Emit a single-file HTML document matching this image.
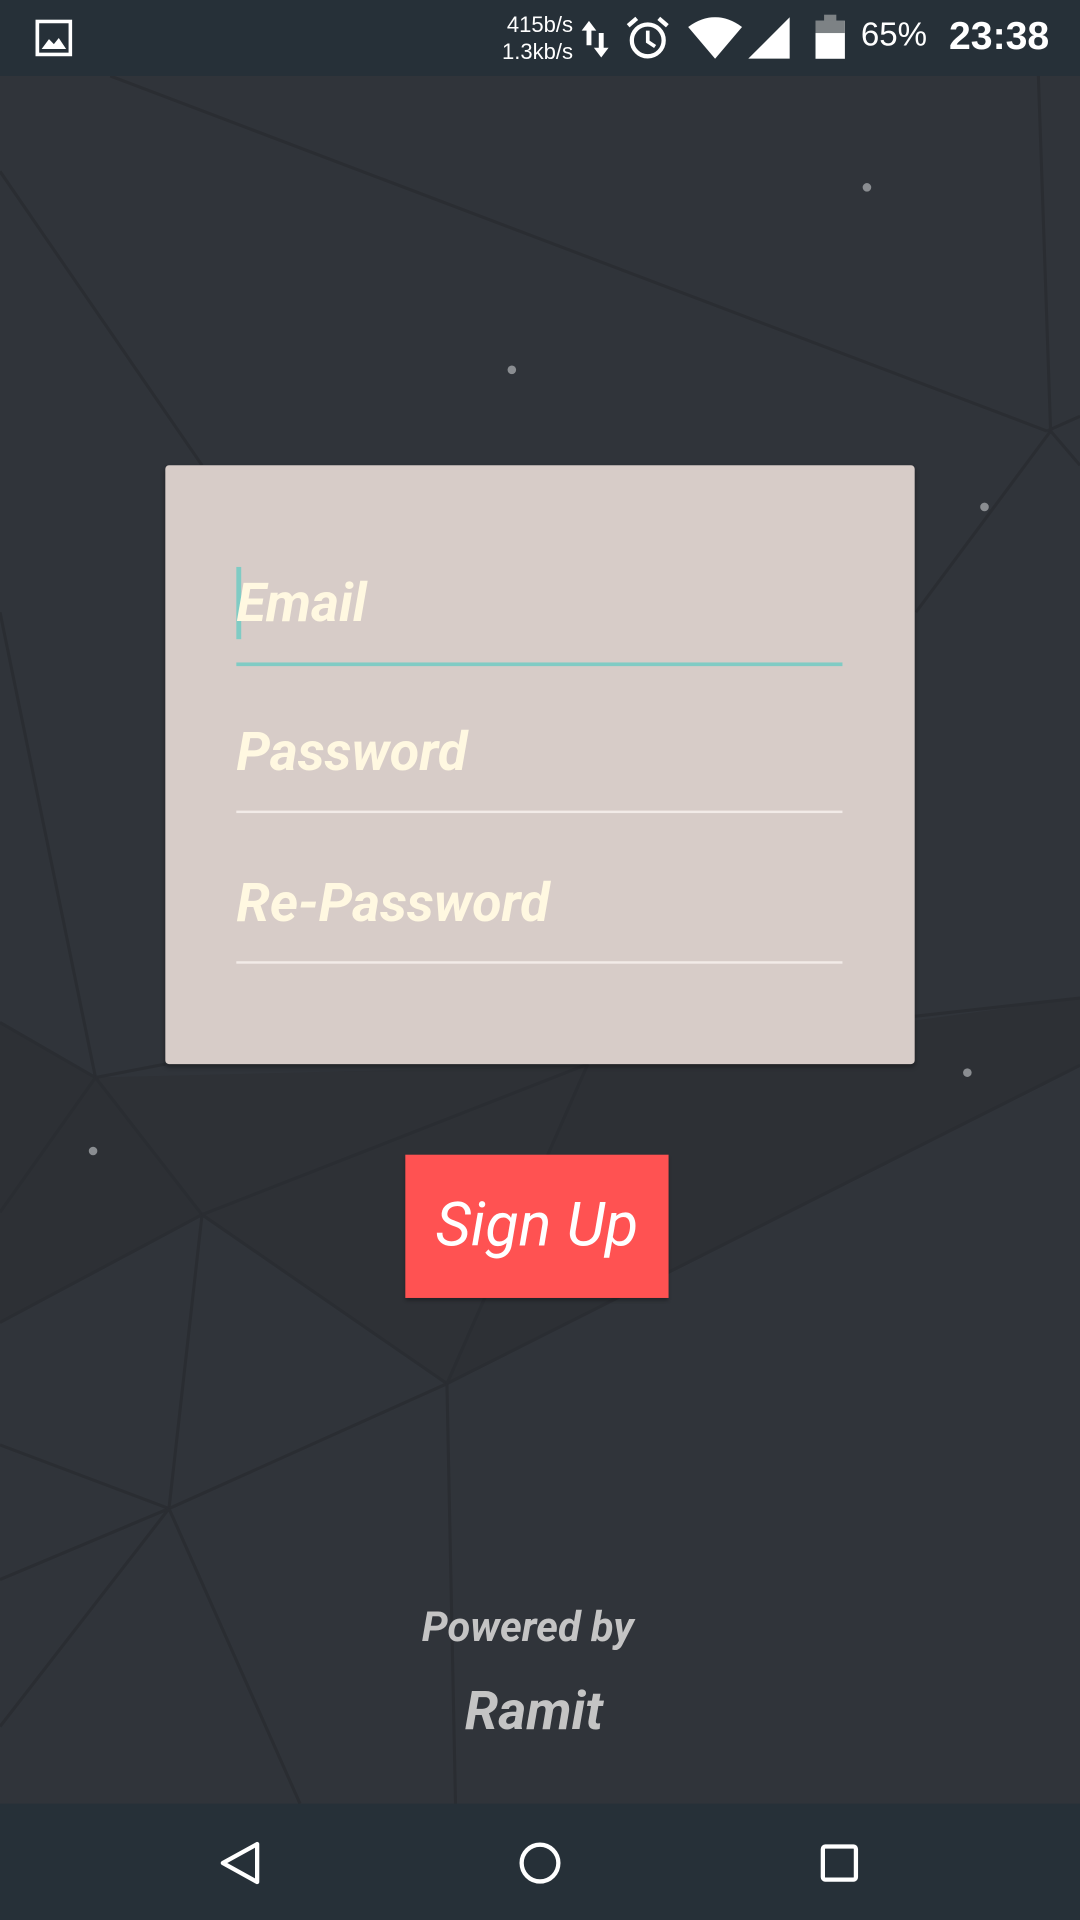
<!DOCTYPE html>
<html><head><meta charset="utf-8">
<style>
html,body{margin:0;padding:0;width:1080px;height:1920px;overflow:hidden;background:#30343a;}
#w{position:absolute;left:0;top:0;width:882px;height:1568px;transform:scale(1.22449);transform-origin:0 0;font-family:"Roboto","Liberation Sans",sans-serif;}
.abs{position:absolute;}
.sb{left:0;top:0;width:882px;height:62px;background:#263038;}
.nav{left:0;top:1473px;width:882px;height:95px;background:#263038;}
.card{left:135px;top:380px;width:612px;height:489px;background:#d7ccc8;border-radius:3px;box-shadow:0 2px 4px rgba(0,0,0,.35);}
.lbl{color:#fff8e1;font-weight:bold;font-style:italic;font-size:44px;left:193px;}
.ul{left:193px;width:495px;height:2px;background:#f2ebe8;}
.btn{left:331px;top:943px;width:215px;height:117px;background:#ff5252;color:#fff;font-style:italic;font-size:50px;text-align:center;line-height:117px;box-shadow:0 2px 3px rgba(0,0,0,.3);}
.pw{color:#c4c4c4;font-style:italic;font-weight:bold;text-align:center;width:882px;}
</style></head><body><div id="w">
<svg class="abs" style="left:0;top:0" width="882" height="1568" viewBox="0 0 882 1568">
<rect width="882" height="1568" fill="#30343a"/>
<polygon points="0,835 78,880 165,992 0,1080" fill="#2d3035"/>
<polygon points="78,880 480,870 365,1130 165,992" fill="#2e3136"/>
<polygon points="480,870 882,815 882,870 365,1130" fill="#2d3035"/>
<g stroke="#2a2d32" stroke-width="2.5" fill="none">
<line x1="90" y1="62" x2="855" y2="352"/><line x1="855" y1="352" x2="882" y2="340"/>
<line x1="848" y1="62" x2="858" y2="352"/><line x1="858" y1="352" x2="748" y2="500"/>
<line x1="858" y1="352" x2="882" y2="380"/>
<line x1="0" y1="140" x2="165" y2="380"/><line x1="0" y1="500" x2="78" y2="880"/>
<line x1="78" y1="880" x2="165" y2="992"/><line x1="0" y1="835" x2="78" y2="880"/>
<line x1="78" y1="880" x2="0" y2="990"/><line x1="78" y1="880" x2="135" y2="869"/>
<line x1="165" y1="992" x2="365" y2="1130"/><line x1="165" y1="992" x2="138" y2="1232"/>
<line x1="138" y1="1232" x2="365" y2="1130"/><line x1="365" y1="1130" x2="372" y2="1473"/>
<line x1="138" y1="1232" x2="0" y2="1180"/><line x1="138" y1="1232" x2="0" y2="1290"/>
<line x1="138" y1="1232" x2="0" y2="1410"/><line x1="138" y1="1232" x2="245" y2="1473"/>
<line x1="365" y1="1130" x2="882" y2="870"/><line x1="0" y1="1080" x2="165" y2="992"/>
<line x1="747" y1="830" x2="882" y2="815"/><line x1="165" y1="992" x2="480" y2="869"/>
<line x1="365" y1="1130" x2="480" y2="869"/>
</g>
<g fill="#8a8d91"><circle cx="708" cy="153" r="3.5"/><circle cx="418" cy="302" r="3.5"/><circle cx="804" cy="414" r="3.5"/><circle cx="790" cy="876" r="3.5"/><circle cx="76" cy="940" r="3.5"/></g>
</svg>
<div class="abs sb"></div>
<svg class="abs" style="left:29px;top:16px" width="30" height="30" viewBox="0 0 30 30"><rect x="1.5" y="1.5" width="27" height="27" fill="none" stroke="#fff" stroke-width="3"/><path d="M5 24 L11 16 L15 20 L19 15 L25 24 Z" fill="#fff"/></svg>
<div class="abs" style="left:395px;top:9px;width:73px;text-align:right;color:#fff;font-size:18px;line-height:22px;font-family:'Liberation Sans',sans-serif">415b/s<br>1.3kb/s</div>
<svg class="abs" style="left:473px;top:15px" width="26" height="34" viewBox="0 0 26 34"><path d="M8 2 L2 10 H6 V22 H10 V10 H14 Z M18 32 L24 24 H20 V12 H16 V24 H12 Z" fill="#fff"/></svg>
<svg class="abs" style="left:510px;top:13px" width="38" height="36" viewBox="0 0 38 36"><circle cx="19" cy="20" r="13" fill="none" stroke="#fff" stroke-width="3.5"/><path d="M19 12 V21 L25 25" stroke="#fff" stroke-width="3" fill="none"/><path d="M3 8 L10 2 M35 8 L28 2" stroke="#fff" stroke-width="3.5"/></svg>
<svg class="abs" style="left:561px;top:14px" width="46" height="34" viewBox="0 0 46 34"><path d="M1 8 Q23 -8 45 8 L23 34 Z" fill="#fff"/></svg>
<svg class="abs" style="left:611px;top:14px" width="34" height="34" viewBox="0 0 34 34"><path d="M0 34 L34 0 V34 Z" fill="#fff"/></svg>
<div class="abs" style="left:666px;top:17px;width:24px;height:31px;background:#fff"></div>
<div class="abs" style="left:666px;top:17px;width:24px;height:10px;background:#7d8285"></div>
<div class="abs" style="left:673px;top:12px;width:10px;height:5px;background:#7d8285"></div>
<div class="abs" style="left:703px;top:13px;color:#fff;font-size:27px;font-family:'Liberation Sans',sans-serif">65%</div>
<div class="abs" style="left:775px;top:11px;color:#fff;font-size:32px;font-weight:bold;font-family:'Liberation Sans',sans-serif">23:38</div>

<div class="abs card"></div>
<div class="abs" style="left:193px;top:463px;width:4px;height:59px;background:#80cbc4"></div>
<div class="abs lbl" style="top:466px;">Email</div>
<div class="abs ul" style="top:541px;height:3px;background:#80cbc4"></div>
<div class="abs lbl" style="top:588px;">Password</div>
<div class="abs ul" style="top:662px;"></div>
<div class="abs lbl" style="top:711px;">Re-Password</div>
<div class="abs ul" style="top:785px;"></div>

<div class="abs btn">Sign Up</div>
<div class="abs pw" style="top:1309px;font-size:34px;left:-10px">Powered by</div>
<div class="abs pw" style="top:1371px;font-size:44px;left:-5px">Ramit</div>

<div class="abs nav"></div>
<svg class="abs" style="left:0;top:1473px" width="882" height="95" viewBox="0 0 882 95"><path d="M210 33 V64 L182 48.5 Z" fill="none" stroke="#fff" stroke-width="3.5" stroke-linejoin="round"/><circle cx="441" cy="48.5" r="15" fill="none" stroke="#fff" stroke-width="3.5"/><rect x="672" y="35" width="27" height="27" rx="2" fill="none" stroke="#fff" stroke-width="3.5"/></svg>
</div></body></html>
